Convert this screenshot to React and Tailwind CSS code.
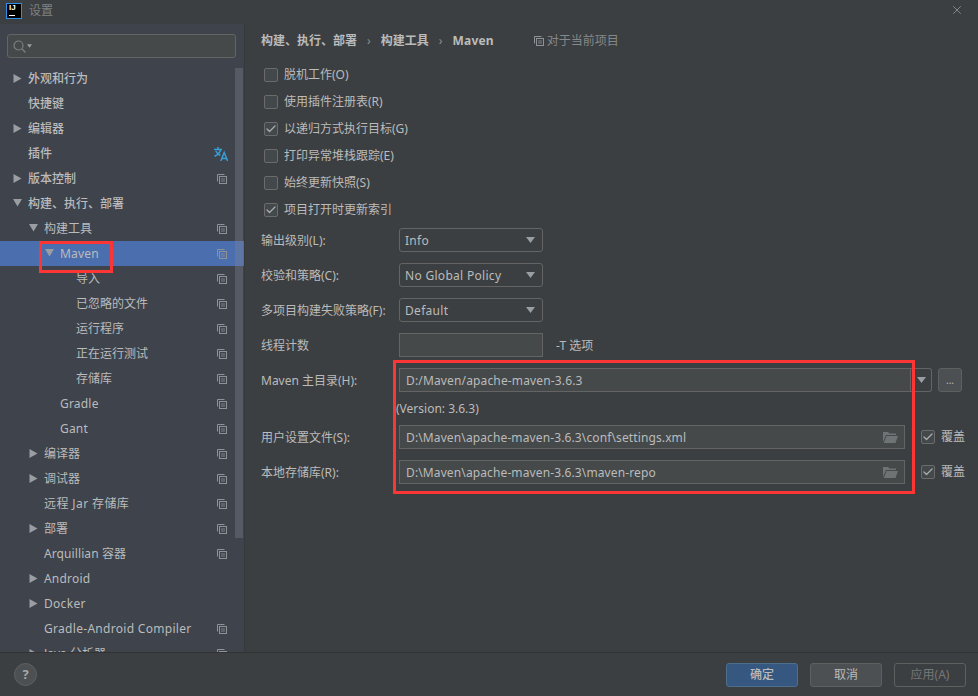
import { X, Check } from 'lucide-react'

const TREE = [
  { name: '外观和行为', depth: 0, arrow: 'right' },
  { name: '快捷键', depth: 0 },
  { name: '编辑器', depth: 0, arrow: 'right' },
  { name: '插件', depth: 0, icon: 'translate' },
  { name: '版本控制', depth: 0, arrow: 'right', icon: 'copy' },
  { name: '构建、执行、部署', depth: 0, arrow: 'down' },
  { name: '构建工具', depth: 1, arrow: 'down', icon: 'copy' },
  { name: 'Maven', depth: 2, arrow: 'down', icon: 'copy', selected: true, tr: 'tracking-[0.2px]' },
  { name: '导入', depth: 3, icon: 'copy' },
  { name: '已忽略的文件', depth: 3, icon: 'copy' },
  { name: '运行程序', depth: 3, icon: 'copy' },
  { name: '正在运行测试', depth: 3, icon: 'copy' },
  { name: '存储库', depth: 3, icon: 'copy' },
  { name: 'Gradle', depth: 2, icon: 'copy', tr: 'tracking-[0.2px]' },
  { name: 'Gant', depth: 2, icon: 'copy', tr: 'tracking-[0.2px]' },
  { name: '编译器', depth: 1, arrow: 'right', icon: 'copy' },
  { name: '调试器', depth: 1, arrow: 'right', icon: 'copy' },
  { name: '远程 Jar 存储库', depth: 1, icon: 'copy', tr: 'tracking-[0.4px]' },
  { name: '部署', depth: 1, arrow: 'right', icon: 'copy' },
  { name: 'Arquillian 容器', depth: 1, icon: 'copy', tr: 'tracking-[0.1px]' },
  { name: 'Android', depth: 1, arrow: 'right', tr: 'tracking-[0.2px]' },
  { name: 'Docker', depth: 1, arrow: 'right', tr: 'tracking-[0.3px]' },
  { name: 'Gradle-Android Compiler', depth: 1, icon: 'copy', tr: 'tracking-[0.3px]' },
  { name: 'Java 分析器', depth: 1, arrow: 'right', icon: 'copy' },
]

const INDENT = ['pl-[28px]', 'pl-[44px]', 'pl-[60px]', 'pl-[76px]']

const CHECKS = [
  { label: '脱机工作(O)' },
  { label: '使用插件注册表(R)' },
  { label: '以递归方式执行目标(G)', on: true },
  { label: '打印异常堆栈跟踪(E)' },
  { label: '始终更新快照(S)' },
  { label: '项目打开时更新索引', on: true },
]

const SELECTS = [
  { label: '输出级别(L):', value: 'Info' },
  { label: '校验和策略(C):', value: 'No Global Policy' },
  { label: '多项目构建失败策略(F):', value: 'Default' },
]

function CopyIcon({ className }) {
  return (
    <svg width="10" height="10" viewBox="0 0 10 10" fill="none" stroke="#8f9297" className={className}>
      <path d="M0.5 7.5V0.5H7.5" />
      <rect x="2.5" y="2.5" width="7" height="7" />
      <path d="M4 5H8M4 7H8" strokeWidth="0.8" />
    </svg>
  )
}

function TranslateIcon({ className }) {
  return (
    <svg width="14" height="14" viewBox="0 0 14 14" fill="none" stroke="#389fd6" strokeWidth="1.5" className={className}>
      <path d="M0 2.5H8M4 0V2.5M6.8 2.5C6 5.5 3.5 8 0.5 9.3M1.8 4C2.8 6 4.3 7.5 6.3 8.5" />
      <path d="M6.8 14L10.2 5.5L13.6 14M8 11.5H12.4" />
    </svg>
  )
}

function Arrow({ dir }) {
  if (dir === 'down') {
    return (
      <svg width="9" height="9" viewBox="0 0 9 9" fill="#9a9da1" className="absolute left-[-15px] top-[7px]">
        <path d="M0 1H9L4.5 8.5Z" />
      </svg>
    )
  }
  return (
    <svg width="9" height="9" viewBox="0 0 9 9" fill="#9a9da1" className="absolute left-[-15px] top-[8px]">
      <path d="M0.5 0V9L8.5 4.5Z" />
    </svg>
  )
}

function TreeRow({ row }) {
  return (
    <div className={`h-[25px] shrink-0 flex items-center pr-[17px] ${INDENT[row.depth]} ${row.selected ? 'bg-[#4b6eaf]' : ''}`}>
      <span className={`relative leading-[25px] ${row.depth === 0 ? 'font-medium' : ''} ${row.tr || ''}`}>
        {row.arrow && <Arrow dir={row.arrow} />}
        {row.name}
      </span>
      <span className="ml-auto flex items-center">
        {row.icon === 'copy' && <CopyIcon />}
        {row.icon === 'translate' && <TranslateIcon className="mr-[-1px]" />}
      </span>
    </div>
  )
}

function Checkbox({ on }) {
  return (
    <span className="w-[14px] h-[14px] shrink-0 rounded-[2px] border border-[#6b6b6b] bg-[#43494a] flex items-center justify-center">
      {on && <Check size={12} strokeWidth={2.5} className="text-[#a9adb0]" />}
    </span>
  )
}

function Caret({ className }) {
  return (
    <svg width="9" height="6" viewBox="0 0 9 6" fill="#9a9da1" className={className}>
      <path d="M0 0H9L4.5 6Z" />
    </svg>
  )
}

function FolderIcon() {
  return (
    <svg width="15" height="11" viewBox="0 0 15 11" fill="#6e7376" className="shrink-0">
      <path d="M0 0H5L6.5 1.5H13V3H3L0 10V0Z" />
      <path d="M3.5 4H15L12.5 11H0.8Z" />
    </svg>
  )
}

function FieldLabel({ children }) {
  return <div className="w-[138px] shrink-0 pt-px">{children}</div>
}

function PathRow({ label, value, mt }) {
  return (
    <div className={`flex items-center h-[24px] ${mt}`}>
      <FieldLabel>{label}</FieldLabel>
      <div className="w-[506px] h-[24px] px-[6px] flex items-center border border-[#646464] bg-[#45494a]">
        <span className="truncate pt-px tracking-[0.12px]">{value}</span>
        <span className="ml-auto">
          <FolderIcon />
        </span>
      </div>
      <div className="ml-[16px] mr-[6px]">
        <Checkbox on />
      </div>
      <span>覆盖</span>
    </div>
  )
}

export default function App() {
  return (
    <div className="relative w-[978px] h-[696px] overflow-hidden flex flex-col bg-[#3c3f41] text-[12px] text-[#bbbbbb] font-['Noto_Sans','Noto_Sans_CJK_SC',sans-serif]">
      {/* title bar */}
      <div className="h-[24px] shrink-0 flex items-center pl-[6px] pr-[14px]">
        <div className="w-[16px] h-[16px] border border-[#2f8fe8] bg-black relative overflow-hidden mt-[-3px]">
          <span className="absolute left-[2px] top-[-1px] text-[8px] leading-[10px] font-bold text-white font-['Liberation_Sans',sans-serif]">IJ</span>
          <span className="absolute left-[2px] bottom-[2px] w-[6px] h-px bg-white" />
        </div>
        <span className="ml-[7px] text-[#7f8285] mt-[-3px]">设置</span>
        <X size={14} strokeWidth={1.2} className="ml-auto text-[#a4a6a8] mt-[-4px]" />
      </div>

      <div className="flex flex-1 min-h-0">
        {/* sidebar */}
        <aside className="relative w-[244px] shrink-0 bg-[#3e434c] flex flex-col overflow-hidden">
          <div className="ml-[7px] mr-[8px] mt-[10px] h-[24px] shrink-0 rounded-[3px] border border-[#646464] bg-[#45494a] flex items-center pl-[5px] gap-[1px]">
            <svg width="13" height="13" viewBox="0 0 13 13" fill="none" stroke="#7d8083" strokeWidth="1.2">
              <circle cx="5.5" cy="5.5" r="4.5" />
              <path d="M9 9L12.5 12.5" />
            </svg>
            <Caret className="w-[5px] h-[4px]" />
          </div>
          <div className="mt-[8px] flex flex-col">
            {TREE.map((row) => (
              <TreeRow key={row.name} row={row} />
            ))}
          </div>
          {/* scrollbar */}
          <div className="absolute left-[235px] top-[44px] w-[8px] h-[470px] bg-[rgba(130,135,145,0.35)]" />
        </aside>

        {/* content */}
        <main className="flex-1 min-w-0 pl-[16px] border-l border-[#36393b]">
          <div className="h-[32px] pt-[2px] flex items-center">
            <span className="font-bold">构建、执行、部署</span>
            <span className="mx-[10px] text-[#8c8f92]">›</span>
            <span className="font-bold">构建工具</span>
            <span className="mx-[10px] text-[#8c8f92]">›</span>
            <span className="font-bold tracking-[0.2px]">Maven</span>
            <CopyIcon className="ml-[40px]" />
            <span className="ml-[3px] text-[#85888b]">对于当前项目</span>
          </div>

          <div className="mt-[5px] pl-[3px]">
            {CHECKS.map((c) => (
              <div key={c.label} className="h-[27px] flex items-center gap-[6px]">
                <Checkbox on={c.on} />
                <span>{c.label}</span>
              </div>
            ))}
          </div>

          <div className="mt-[5px] flex flex-col gap-[11px]">
            {SELECTS.map((s) => (
              <div key={s.label} className="flex items-center h-[24px]">
                <FieldLabel>{s.label}</FieldLabel>
                <div className="w-[144px] h-[24px] pl-[5px] pr-[7px] rounded-[3px] border border-[#646464] bg-[#3c3f41] flex items-center justify-between">
                  <span className="pt-px tracking-[0.3px]">{s.value}</span>
                  <Caret />
                </div>
              </div>
            ))}
            <div className="flex items-center h-[24px]">
              <FieldLabel>线程计数</FieldLabel>
              <div className="w-[144px] h-[24px] border border-[#646464] bg-[#45494a]" />
              <span className="ml-[13px] pt-px">-T 选项</span>
            </div>
          </div>

          <div className="flex items-center h-[24px] mt-[11px]">
            <FieldLabel>Maven 主目录(H):</FieldLabel>
            <div className="w-[512px] h-[24px] px-[6px] flex items-center border border-[#646464] bg-[#45494a]">
              <span className="pt-px tracking-[0.15px]">D:/Maven/apache-maven-3.6.3</span>
            </div>
            <div className="w-[21px] h-[24px] rounded-r-[3px] border border-l-0 border-[#646464] flex items-center justify-center">
              <Caret />
            </div>
            <div className="ml-[6px] w-[24px] h-[24px] rounded-[3px] border border-[#5e6060] bg-[#4c5052] flex items-center justify-center text-[10px] leading-none">
              ...
            </div>
          </div>
          <div className="h-[22px] mt-[5px] ml-[135px] pt-px flex items-center">(Version: 3.6.3)</div>
          <PathRow label="用户设置文件(S):" value={'D:\\Maven\\apache-maven-3.6.3\\conf\\settings.xml'} mt="mt-[6px]" />
          <PathRow label="本地存储库(R):" value={'D:\\Maven\\apache-maven-3.6.3\\maven-repo'} mt="mt-[11px]" />
        </main>
      </div>

      {/* bottom bar */}
      <div className="h-[44px] shrink-0 border-t border-[#323232] flex items-center pl-[14px] pr-[12px]">
        <div className="w-[23px] h-[23px] rounded-full bg-[#4c5052] border border-[#5e6060] flex items-center justify-center font-bold text-[13px] text-[#a6a9ac]">?</div>
        <div className="ml-auto flex gap-[12px]">
          <div className="w-[72px] h-[24px] rounded-[3px] border border-[#4c708c] bg-[#365880] flex items-center justify-center font-medium">确定</div>
          <div className="w-[72px] h-[24px] rounded-[3px] border border-[#5e6060] bg-[#4c5052] flex items-center justify-center">取消</div>
          <div className="w-[72px] h-[24px] rounded-[3px] border border-[#5e6060] flex items-center justify-center text-[#777777]">应用(A)</div>
        </div>
      </div>

      {/* red annotation boxes */}
      <div className="absolute left-[39px] top-[241px] w-[74px] h-[32px] border-[3px] border-[#fc3535]" />
      <div className="absolute left-[393px] top-[360px] w-[522px] h-[134px] border-[3px] border-[#fc3535]" />
    </div>
  )
}
